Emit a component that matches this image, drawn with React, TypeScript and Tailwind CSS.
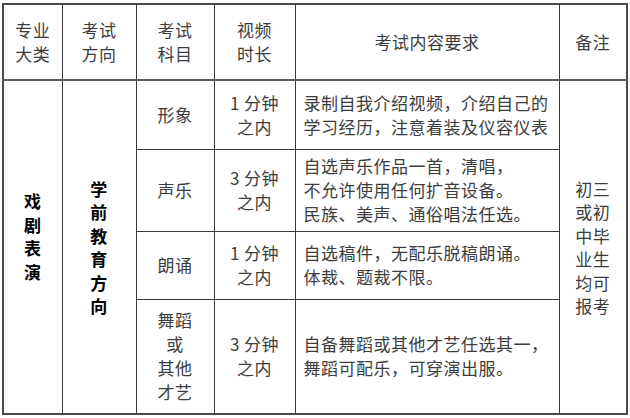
const font = { fontFamily: '"Noto Sans CJK SC", "Noto Sans", sans-serif' };

type Row = {
  subject: string[];
  time: string[];
  content: string[];
  h: string;
};

const rows: Row[] = [
  {
    subject: ["形象"],
    time: ["1 分钟", "之内"],
    content: ["录制自我介绍视频，介绍自己的", "学习经历，注意着装及仪容仪表"],
    h: "h-[69px]",
  },
  {
    subject: ["声乐"],
    time: ["3 分钟", "之内"],
    content: ["自选声乐作品一首，清唱，", "不允许使用任何扩音设备。", "民族、美声、通俗唱法任选。"],
    h: "h-[82px]",
  },
  {
    subject: ["朗诵"],
    time: ["1 分钟", "之内"],
    content: ["自选稿件，无配乐脱稿朗诵。", "体裁、题裁不限。"],
    h: "h-[68px]",
  },
  {
    subject: ["舞蹈", "或", "其他", "才艺"],
    time: ["3 分钟", "之内"],
    content: ["自备舞蹈或其他才艺任选其一，", "舞蹈可配乐，可穿演出服。"],
    h: "h-[115px]",
  },
];

function Lines({ items }: { items: string[] }) {
  return (
    <>
      {items.map((t, i) => (
        <div key={i}>{t}</div>
      ))}
    </>
  );
}

export default function App() {
  const cell = "border border-[#3a3a3a] p-0 align-middle";
  return (
    <div className="w-[630px] h-[418px] bg-white pt-[3px] pl-[2px]" style={font}>
      <table className="table-fixed border-collapse border-2 border-[#4a4a4a] text-[17px] leading-[24px] tracking-[0.5px] text-[#3d3d3d]">
        <colgroup>
          <col className="w-[59px]" />
          <col className="w-[74px]" />
          <col className="w-[78px]" />
          <col className="w-[81px]" />
          <col className="w-[264px]" />
          <col className="w-[68px]" />
        </colgroup>
        <thead>
          <tr className="h-[76px] text-center">
            <th className={`${cell} font-normal`}>
              <Lines items={["专业", "大类"]} />
            </th>
            <th className={`${cell} font-normal`}>
              <Lines items={["考试", "方向"]} />
            </th>
            <th className={`${cell} font-normal`}>
              <Lines items={["考试", "科目"]} />
            </th>
            <th className={`${cell} font-normal`}>
              <Lines items={["视频", "时长"]} />
            </th>
            <th className={`${cell} font-normal`}>考试内容要求</th>
            <th className={`${cell} font-normal`}>备注</th>
          </tr>
        </thead>
        <tbody className="border-t-2 border-[#5a5a5a]">
          {rows.map((r, i) => (
            <tr key={i} className={r.h}>
              {i === 0 && (
                <td rowSpan={4} className={`${cell} text-center font-bold text-black pb-[22px] leading-[23.5px]`}>
                  <Lines items={["戏", "剧", "表", "演"]} />
                </td>
              )}
              {i === 0 && (
                <td rowSpan={4} className={`${cell} text-center font-bold text-black leading-[23.5px]`}>
                  <Lines items={["学", "前", "教", "育", "方", "向"]} />
                </td>
              )}
              <td className={`${cell} text-center`}>
                <Lines items={r.subject} />
              </td>
              <td className={`${cell} text-center`}>
                <Lines items={r.time} />
              </td>
              <td className={`${cell} pl-[8px] pr-[2px] text-left`}>
                <Lines items={r.content} />
              </td>
              {i === 0 && (
                <td rowSpan={4} className={`${cell} text-center leading-[23.5px]`}>
                  <Lines items={["初三", "或初", "中毕", "业生", "均可", "报考"]} />
                </td>
              )}
            </tr>
          ))}
        </tbody>
      </table>
    </div>
  );
}
